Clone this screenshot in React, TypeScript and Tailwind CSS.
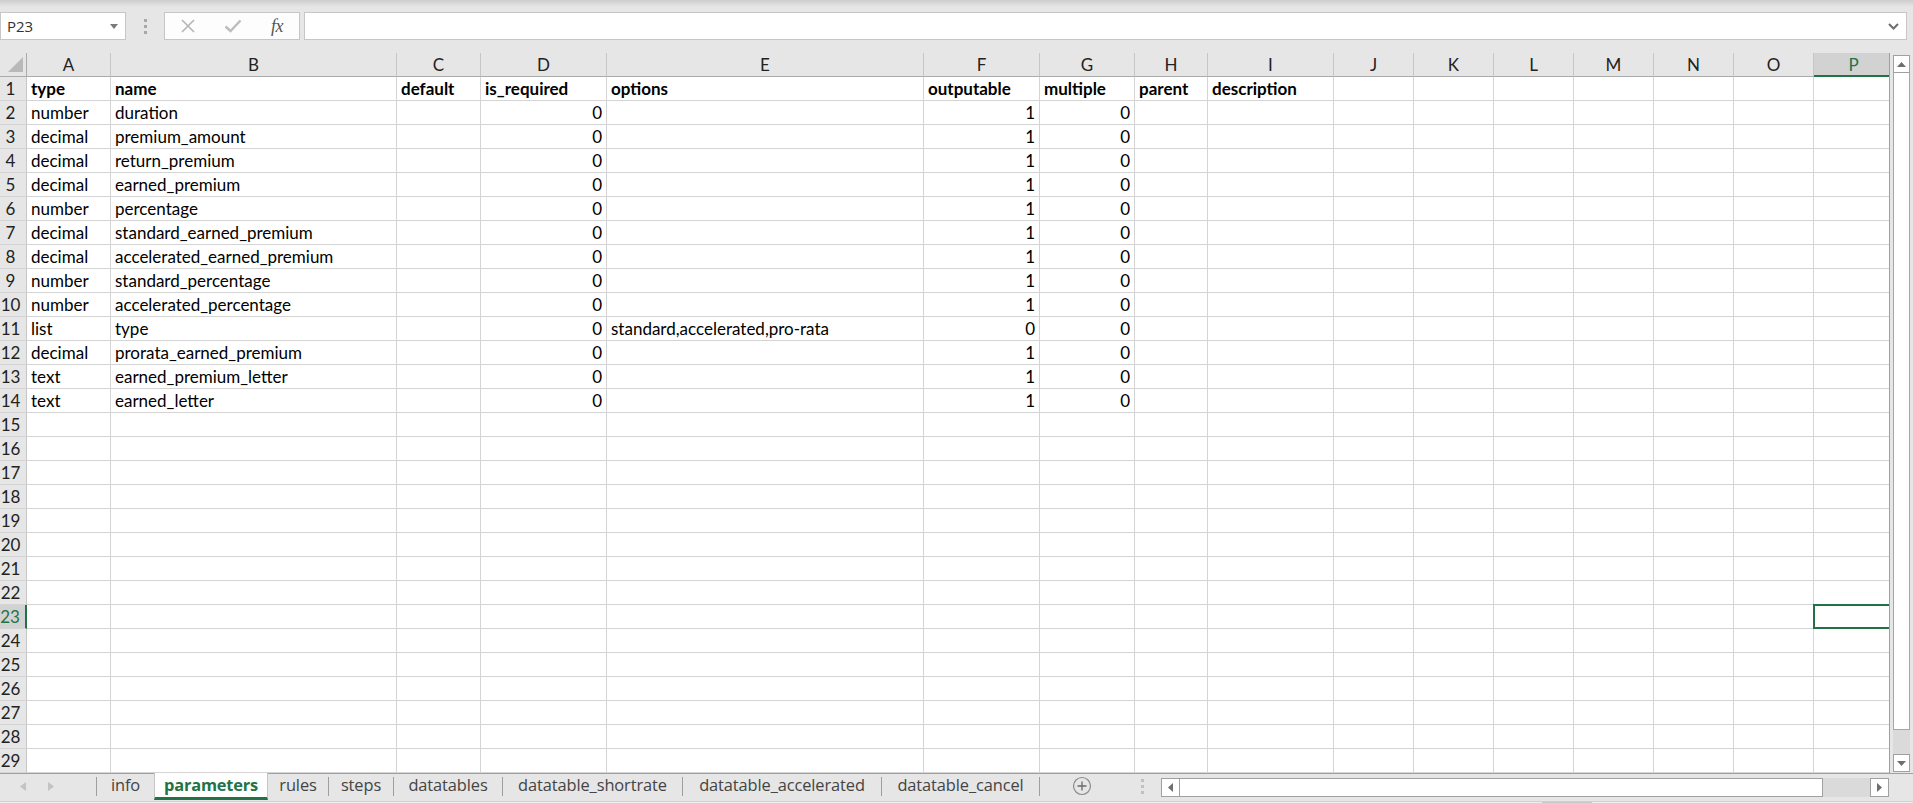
import React from 'react';

const COLS = [
  { key: 'A', w: 'w-[84px]' },
  { key: 'B', w: 'w-[286px]' },
  { key: 'C', w: 'w-[84px]' },
  { key: 'D', w: 'w-[126px]' },
  { key: 'E', w: 'w-[317px]' },
  { key: 'F', w: 'w-[116px]' },
  { key: 'G', w: 'w-[95px]' },
  { key: 'H', w: 'w-[73px]' },
  { key: 'I', w: 'w-[126px]' },
  { key: 'J', w: 'w-[80px]' },
  { key: 'K', w: 'w-[80px]' },
  { key: 'L', w: 'w-[80px]' },
  { key: 'M', w: 'w-[80px]' },
  { key: 'N', w: 'w-[80px]' },
  { key: 'O', w: 'w-[80px]' },
  { key: 'P', w: 'w-[80px]' },
];

const HEADERS = ['type', 'name', 'default', 'is_required', 'options', 'outputable', 'multiple', 'parent', 'description'];

// type, name, default, is_required, options, outputable, multiple
const DATA: (string | number)[][] = [
  ['number', 'duration', '', 0, '', 1, 0],
  ['decimal', 'premium_amount', '', 0, '', 1, 0],
  ['decimal', 'return_premium', '', 0, '', 1, 0],
  ['decimal', 'earned_premium', '', 0, '', 1, 0],
  ['number', 'percentage', '', 0, '', 1, 0],
  ['decimal', 'standard_earned_premium', '', 0, '', 1, 0],
  ['decimal', 'accelerated_earned_premium', '', 0, '', 1, 0],
  ['number', 'standard_percentage', '', 0, '', 1, 0],
  ['number', 'accelerated_percentage', '', 0, '', 1, 0],
  ['list', 'type', '', 0, 'standard,accelerated,pro-rata', 0, 0],
  ['decimal', 'prorata_earned_premium', '', 0, '', 1, 0],
  ['text', 'earned_premium_letter', '', 0, '', 1, 0],
  ['text', 'earned_letter', '', 0, '', 1, 0],
];

const TOTAL_ROWS = 29;
const SEL_ROW = 23;
const SEL_COL = 'P';

// sheet tabs, widths measured off the sheet bar (separator included)
const TABS = [
  { name: 'info', w: 'w-[57px]', sep: false },
  { name: 'parameters', w: 'w-[114px]', sep: false, active: true },
  { name: 'rules', w: 'w-[61px]', sep: true },
  { name: 'steps', w: 'w-[65px]', sep: true },
  { name: 'datatables', w: 'w-[109px]', sep: true },
  { name: 'datatable_shortrate', w: 'w-[180px]', sep: true },
  { name: 'datatable_accelerated', w: 'w-[199px]', sep: true },
  { name: 'datatable_cancel', w: 'w-[158px]', sep: true },
];

const Toolbar: React.FC = () => (
  <div className="h-[53px] shrink-0 pt-[12px] flex items-start bg-[linear-gradient(to_bottom,#cdcdcd,#e6e6e6_7px)]">
    {/* Name box */}
    <div className="w-[126px] h-[28px] bg-white border border-[#c6c6c6] flex items-center justify-between pl-[6px] pr-[7px] text-[15px] text-[#333] font-['Open_Sans',sans-serif]">
      <span>P23</span>
      <svg width="8" height="5" viewBox="0 0 8 5">
        <polygon points="0,0 8,0 4,5" fill="#7a7a7a" />
      </svg>
    </div>
    {/* grip dots */}
    <div className="w-[38px] h-[28px] flex flex-col items-center justify-center gap-[3px]">
      <span className="w-[3px] h-[3px] bg-[#a8a8a8]" />
      <span className="w-[3px] h-[3px] bg-[#a8a8a8]" />
      <span className="w-[3px] h-[3px] bg-[#a8a8a8]" />
    </div>
    {/* cancel / enter / fx */}
    <div className="w-[136px] h-[28px] bg-[#fdfdfd] border border-[#c6c6c6] flex items-center">
      <div className="w-[46px] flex justify-center">
        <svg width="16" height="16" viewBox="0 0 16 16">
          <path d="M2 2 L14 14 M14 2 L2 14" stroke="#b5b5b5" strokeWidth="1.6" fill="none" />
        </svg>
      </div>
      <div className="w-[44px] flex justify-center">
        <svg width="18" height="14" viewBox="0 0 18 14">
          <path d="M1.5 7.5 L6.5 12 L16.5 1.5" stroke="#bdbdbd" strokeWidth="2.4" fill="none" />
        </svg>
      </div>
      <div className="w-[44px] flex justify-center font-['Liberation_Serif',serif] italic text-[18px] leading-none text-[#555] tracking-[-0.5px]">
        fx
      </div>
    </div>
    {/* formula bar */}
    <div className="ml-[4px] w-[1603px] h-[28px] bg-white border border-[#c6c6c6] flex items-center justify-end pr-[7px]">
      <svg width="11" height="7" viewBox="0 0 11 7">
        <path d="M1 1 L5.5 5.5 L10 1" stroke="#6e6e6e" strokeWidth="2" fill="none" />
      </svg>
    </div>
  </div>
);

const HeaderRow: React.FC = () => (
  <div className="flex h-[24px] shrink-0 bg-[#e6e6e6]">
    <div className="w-[27px] shrink-0 border-r border-b border-[#ababab] relative">
      <svg width="26" height="23" viewBox="0 0 26 23" className="block">
        <polygon points="8,19 23,19 23,4" fill="#b9b9b9" />
      </svg>
    </div>
    {COLS.map((c) => {
      const sel = c.key === SEL_COL;
      return (
        <div
          key={c.key}
          className={`${c.w} shrink-0 flex items-center justify-center border-r ${
            sel
              ? 'bg-[#d2d2d2] text-[#217346] border-[#c6c6c6] border-b-2 border-b-[#217346]'
              : 'text-[#222] border-[#c6c6c6] border-b border-b-[#ababab]'
          }`}
        >
          {c.key}
        </div>
      );
    })}
  </div>
);

const cellValue = (row: number, colIdx: number): { text: string; bold?: boolean; right?: boolean } => {
  if (row === 1) {
    return { text: HEADERS[colIdx] ?? '', bold: true };
  }
  const d = DATA[row - 2];
  if (!d || colIdx > 6) return { text: '' };
  const v = d[colIdx];
  return { text: String(v), right: typeof v === 'number' };
};

const DataRow: React.FC<{ n: number }> = ({ n }) => {
  const selRow = n === SEL_ROW;
  return (
    <div className="flex h-[24px] shrink-0">
      <div
        className={`w-[27px] shrink-0 flex items-center justify-center pr-[5px] border-b border-[#d4d4d4] ${
          selRow
            ? 'bg-[#d2d2d2] text-[#217346] border-r-2 border-r-[#217346]'
            : 'bg-[#e6e6e6] text-[#222] border-r border-r-[#c6c6c6]'
        }`}
      >
        {n}
      </div>
      {COLS.map((c, i) => {
        const v = cellValue(n, i);
        const selected = selRow && c.key === SEL_COL;
        return (
          <div
            key={c.key}
            className={`${c.w} shrink-0 relative flex items-center px-[4px] border-r border-b border-[#d4d4d4] whitespace-nowrap text-black ${
              v.right ? 'justify-end' : 'justify-start'
            } ${v.bold ? 'font-bold' : ''}`}
          >
            {v.text}
            {selected && (
              <div className="absolute -left-[1px] -top-[1px] w-[90px] h-[25px] border-2 border-[#217346]" />
            )}
          </div>
        );
      })}
    </div>
  );
};

const Grid: React.FC = () => (
  <div className="w-[1889px] shrink-0 overflow-hidden flex flex-col bg-white font-['Lato',sans-serif] text-[17px] leading-none">
    <HeaderRow />
    {Array.from({ length: TOTAL_ROWS }, (_, i) => (
      <DataRow key={i} n={i + 1} />
    ))}
  </div>
);

const VScroll: React.FC = () => (
  <div className="flex-1 border-l border-[#a0a0a0] bg-[#e6e6e6] flex flex-col pt-[2px] pb-[1px] pl-[3px] pr-[3px]">
    <div className="h-[18px] shrink-0 bg-white border border-[#a0a0a0] flex items-center justify-center">
      <svg width="9" height="5" viewBox="0 0 9 5">
        <polygon points="0,5 9,5 4.5,0" fill="#6e6e6e" />
      </svg>
    </div>
    <div className="h-[657px] shrink-0 bg-white border border-[#a6a6a6] border-t-0" />
    <div className="flex-1 bg-[#dadada]" />
    <div className="h-[18px] shrink-0 bg-white border border-[#a0a0a0] flex items-center justify-center">
      <svg width="9" height="5" viewBox="0 0 9 5">
        <polygon points="0,0 9,0 4.5,5" fill="#6e6e6e" />
      </svg>
    </div>
  </div>
);

const Sep: React.FC = () => <div className="w-px h-[19px] bg-[#9e9e9e] shrink-0" />;

const SheetTabs: React.FC = () => (
  <div className="h-[28px] shrink-0 border-t border-[#a0a0a0] bg-[#e6e6e6] flex items-start font-['Open_Sans',sans-serif] text-[16.4px] text-[#444]">
    <div className="w-[96px] h-[24px] shrink-0 flex items-center pl-[20px] gap-[22px]">
      <svg width="6" height="9" viewBox="0 0 6 9">
        <polygon points="6,0 6,9 0,4.5" fill="#c3c3c3" />
      </svg>
      <svg width="6" height="9" viewBox="0 0 6 9">
        <polygon points="0,0 0,9 6,4.5" fill="#c3c3c3" />
      </svg>
    </div>
    <div className="h-[24px] flex items-center">
      <Sep />
    </div>
    {TABS.map((t) =>
      t.active ? (
        <div
          key={t.name}
          className={`${t.w} h-[27px] -mt-px shrink-0 bg-white border-x border-[#c6c6c6] border-b-[3px] border-b-[#217346] flex items-center justify-center font-bold text-[#217346] tracking-[-0.2px]`}
        >
          {t.name}
        </div>
      ) : (
        <div key={t.name} className={`${t.w} h-[24px] shrink-0 flex items-center`}>
          <div className="flex-1 text-center leading-none pb-[1px] tracking-[-0.1px] whitespace-nowrap">{t.name}</div>
          {t.sep && <Sep />}
        </div>
      )
    )}
    <div className="w-[84px] h-[24px] shrink-0 flex items-center justify-center">
      <svg width="20" height="20" viewBox="0 0 20 20">
        <circle cx="10" cy="10" r="8.5" stroke="#8a8a8a" strokeWidth="1.2" fill="none" />
        <path d="M10 5.5 V14.5 M5.5 10 H14.5" stroke="#6a6a6a" strokeWidth="1.3" />
      </svg>
    </div>
    <div className="w-[37px] h-[24px] shrink-0 flex flex-col items-center justify-center gap-[3px]">
      <span className="w-[3px] h-[3px] bg-[#c0c0c0]" />
      <span className="w-[3px] h-[3px] bg-[#c0c0c0]" />
      <span className="w-[3px] h-[3px] bg-[#c0c0c0]" />
    </div>
    {/* horizontal scrollbar */}
    <div className="mt-[4px] flex-1 h-[19px] flex mr-[24px]">
      <div className="w-[19px] h-[19px] shrink-0 bg-white border border-[#a0a0a0] flex items-center justify-center">
        <svg width="5" height="9" viewBox="0 0 5 9">
          <polygon points="5,0 5,9 0,4.5" fill="#6e6e6e" />
        </svg>
      </div>
      <div className="w-[643px] h-[19px] shrink-0 bg-white border border-[#a0a0a0] border-l-0" />
      <div className="flex-1 bg-[#dadada]" />
      <div className="w-[19px] h-[19px] shrink-0 bg-white border border-[#a0a0a0] flex items-center justify-center">
        <svg width="5" height="9" viewBox="0 0 5 9">
          <polygon points="0,0 0,9 5,4.5" fill="#6e6e6e" />
        </svg>
      </div>
    </div>
  </div>
);

const StatusStrip: React.FC = () => (
  <div className="flex-1 flex border-t border-[#d0d0d0] bg-[#efefef]">
    <div className="w-[1542px] shrink-0" />
    <div className="w-[50px] shrink-0 bg-[#c9c9c9]" />
  </div>
);

export default function App() {
  return (
    <div className="w-[1913px] h-[803px] overflow-hidden bg-[#e6e6e6] flex flex-col">
      <Toolbar />
      <div className="flex h-[720px] shrink-0">
        <Grid />
        <VScroll />
      </div>
      <SheetTabs />
      <StatusStrip />
    </div>
  );
}
